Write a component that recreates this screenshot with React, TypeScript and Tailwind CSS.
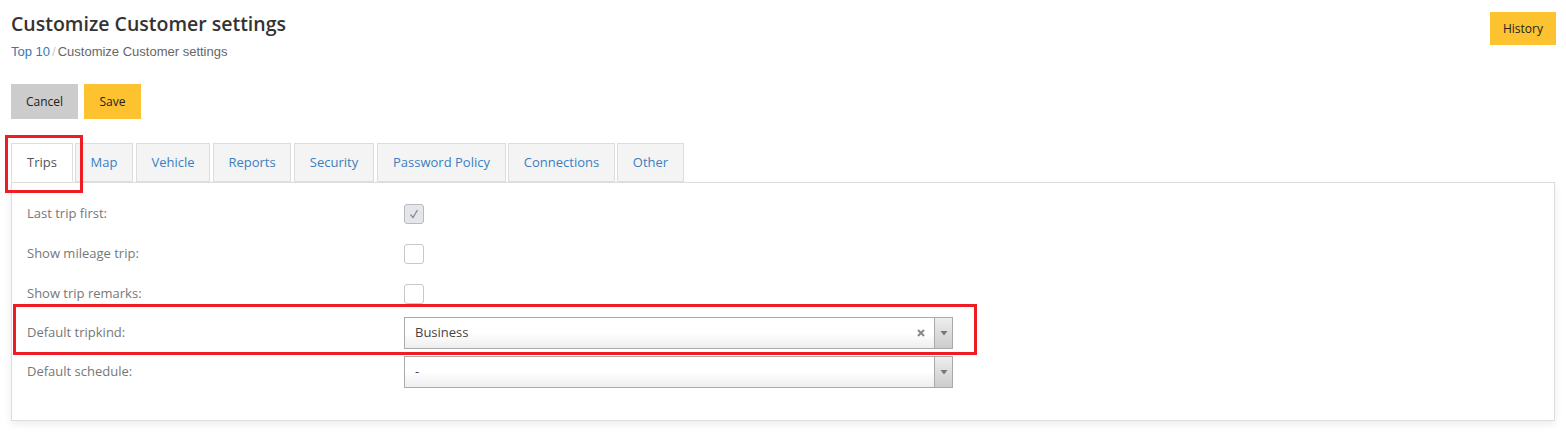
import { useState } from "react";

const tabs = [
  { name: "Trips", w: "w-[62px] mr-[2px]" },
  { name: "Map", w: "w-[58px] mr-[3px]" },
  { name: "Vehicle", w: "w-[74px] mr-[3px]" },
  { name: "Reports", w: "w-[78px] mr-[3px]" },
  { name: "Security", w: "w-[80px] mr-[3px]" },
  { name: "Password Policy", w: "w-[129px] mr-[2px]" },
  { name: "Connections", w: "w-[107px] mr-[2px]" },
  { name: "Other", w: "w-[67px]" },
];

function Checkbox({ checked }: { checked?: boolean }) {
  return (
    <span
      className={
        "flex h-[20px] w-[20px] items-center justify-center rounded-[3px] border " +
        (checked ? "border-[#b8bcc2] bg-[#e4e6e9]" : "border-[#c8c8c8] bg-white")
      }
    >
      {checked && (
        <svg width="12" height="12" viewBox="0 0 12 12">
          <path d="M2.5 6.5 L5 9.5 L9.5 2" fill="none" stroke="#8a9099" strokeWidth="1.4" />
        </svg>
      )}
    </span>
  );
}

function Select({ value, clearable }: { value: string; clearable?: boolean }) {
  return (
    <div className="flex h-[32px] w-[549px] border border-[#aaaaaa] bg-gradient-to-b from-white from-50% to-[#eeeeee]">
      <span className="flex flex-1 items-center pl-[10px] text-[13px] text-[#444]">{value}</span>
      {clearable && (
        <span className="flex w-[26px] items-center justify-center">
          <svg width="8" height="8" viewBox="0 0 8 8">
            <path d="M1 1 L7 7 M7 1 L1 7" stroke="#888" strokeWidth="2" />
          </svg>
        </span>
      )}
      <span className="flex w-[18px] items-center justify-center border-l border-[#aaaaaa] bg-gradient-to-b from-[#eeeeee] to-[#cccccc]">
        <svg width="8" height="6" viewBox="0 0 8 6">
          <path d="M0.5 1 L7.5 1 L4 5.5 Z" fill="#777" />
        </svg>
      </span>
    </div>
  );
}

export default function App() {
  const [active, setActive] = useState("Trips");

  return (
    <div className="relative h-[443px] w-[1566px] bg-white font-['Open_Sans',sans-serif]">
      <div className="flex items-start justify-between pl-[11px] pr-[10px] pt-[9px]">
        <div>
          <h1 className="text-[19.5px] font-semibold leading-[30px] text-[#333]">Customize Customer settings</h1>
          <p className="mt-[4px] font-['Liberation_Sans',sans-serif] text-[13px] leading-[18px] text-[#666]">
            <a className="text-[#337ab7]">Top 10</a>
            <span className="px-[2px] text-[#ccc]">/</span>
            Customize Customer settings
          </p>
        </div>
        <button className="mt-[3px] h-[33px] w-[66px] bg-[#fcc22f] text-[12px] text-[#222]">History</button>
      </div>

      <div className="flex gap-[6px] pl-[11px] pt-[23px]">
        <button className="h-[35px] w-[67px] bg-[#cccccc] text-[12px] text-[#222]">Cancel</button>
        <button className="h-[35px] w-[57px] bg-[#fcc22f] text-[12px] text-[#222]">Save</button>
      </div>

      <div className="mx-[11px] mt-[24px]">
        <div className="flex">
          {tabs.map((t) => (
            <button
              key={t.name}
              onClick={() => setActive(t.name)}
              className={
                "h-[39px] border border-[#dddddd] text-[13px] " +
                t.w +
                " " +
                (t.name === active
                  ? "relative z-10 -mb-px border-b-white bg-white text-[#555]"
                  : "bg-[#f4f4f4] text-[#3a7fc0]")
              }
            >
              {t.name}
            </button>
          ))}
        </div>
        <div className="border border-[#dddddd] bg-white pb-[29px] pl-[15px] pt-[11px] shadow-[0_3px_8px_rgba(0,0,0,0.08)]">
          <div className="flex h-[40px] items-center">
            <span className="w-[377px] text-[13px] text-[#777]">Last trip first:</span>
            <Checkbox checked />
          </div>
          <div className="flex h-[40px] items-center">
            <span className="w-[377px] text-[13px] text-[#777]">Show mileage trip:</span>
            <Checkbox />
          </div>
          <div className="flex h-[39px] items-center">
            <span className="w-[377px] text-[13px] text-[#777]">Show trip remarks:</span>
            <Checkbox />
          </div>
          <div className="flex h-[40px] items-center">
            <span className="w-[377px] text-[13px] text-[#777]">Default tripkind:</span>
            <Select value="Business" clearable />
          </div>
          <div className="flex h-[38px] items-center">
            <span className="w-[377px] text-[13px] text-[#777]">Default schedule:</span>
            <Select value="-" />
          </div>
        </div>
      </div>

      <div className="pointer-events-none absolute left-[5px] top-[135px] h-[58px] w-[78px] border-[3px] border-[#ee1c24]" />
      <div className="pointer-events-none absolute left-[13px] top-[304px] h-[51px] w-[964px] border-[3px] border-[#ee1c24]" />
    </div>
  );
}
